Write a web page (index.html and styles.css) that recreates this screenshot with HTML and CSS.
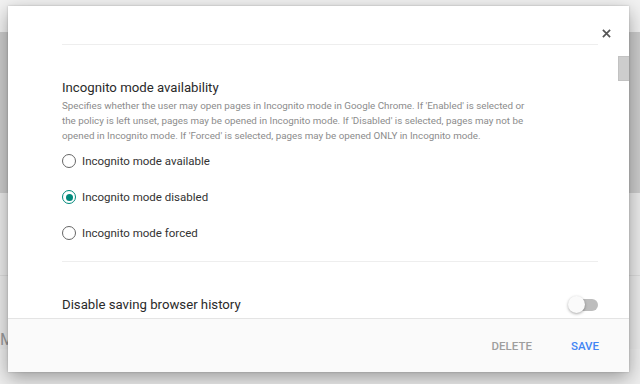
FILE: index.html
```html
<!DOCTYPE html>
<html lang="en">
<head>
    <meta name="viewport" content="width=device-width, initial-scale=1.0">
    <title>Policy settings</title>
    <link rel="stylesheet" href="styles.css">
</head>
<body>
    <!-- page behind the dialog -->
    <div class="page">
        <div class="page-top"></div>
        <div class="page-banner"></div>
        <div class="page-list">
            <div class="page-row"></div>
            <div class="page-row page-row-text"><span>M</span></div>
        </div>
    </div>

    <div class="dialog">
        <div class="dialog-body">
            <button class="close-btn" aria-label="Close">
                <svg width="9" height="9" viewBox="0 0 10 10">
                    <path d="M1 1 L9 9 M9 1 L1 9" stroke="#555" stroke-width="1.9" fill="none"/>
                </svg>
            </button>
            <div class="scrollbar"><div class="scroll-thumb"></div></div>

            <div class="rule top-rule"></div>

            <div class="policy">
                <h2 class="policy-title">Incognito mode availability</h2>
                <p class="policy-desc">Specifies whether the user may open pages in Incognito mode in Google Chrome. If 'Enabled' is selected or the policy is left unset, pages may be opened in Incognito mode. If 'Disabled' is selected, pages may not be opened in Incognito mode. If 'Forced' is selected, pages may be opened ONLY in Incognito mode.</p>
                <div class="radio-list">
                    <label class="radio-row">
                        <span class="radio"></span>
                        <span>Incognito mode available</span>
                    </label>
                    <label class="radio-row">
                        <span class="radio checked"></span>
                        <span>Incognito mode disabled</span>
                    </label>
                    <label class="radio-row">
                        <span class="radio"></span>
                        <span>Incognito mode forced</span>
                    </label>
                </div>
            </div>

            <div class="rule"></div>

            <div class="policy">
                <div class="policy-head">
                    <h2 class="policy-title">Disable saving browser history</h2>
                    <span class="toggle"><span class="toggle-knob"></span></span>
                </div>
                <p class="policy-desc">Disables saving browser history in Google Chrome and prevents users from changing this setting. If this setting is enabled, browsing history is not saved.</p>
            </div>
        </div>

        <div class="dialog-footer">
            <button class="text-btn delete-btn">Delete</button>
            <button class="text-btn save-btn">Save</button>
        </div>
    </div>
</body>
</html>
```

FILE: styles.css
```css
body {
    margin: 0;
    font-family: Roboto, "Liberation Sans", sans-serif;
    background-color: #eeeeee;
    overflow: hidden;
}

/* page behind the dialog */
.page {
    height: 384px;
}
.page-top {
    height: 32px;
    background-color: #f2f2f2;
}
.page-banner {
    height: 161px;
    background-color: #cccccc;
}
.page-list {
    background-color: #ebebeb;
}
.page-row {
    height: 82px;
    border-bottom: 1px solid #dcdcdc;
}
.page-row-text {
    height: auto;
    border: none;
    padding-top: 54px;
    font-size: 16px;
    color: #999;
}

/* dialog */
.dialog {
    position: absolute;
    left: 8px;
    top: 6px;
    width: 621px;
    height: 366px;
    background: white;
    box-shadow: 0 6px 18px rgba(0,0,0,0.35), 0 0 2px rgba(0,0,0,0.2);
    display: flex;
    flex-direction: column;
}
.dialog-body {
    position: relative;
    flex: 1;
    overflow: hidden;
    padding: 0 31px 0 54px;
}
.close-btn {
    position: absolute;
    right: 18px;
    top: 23px;
    width: 9px;
    height: 9px;
    padding: 0;
    border: none;
    background: none;
    display: flex;
}
.scrollbar {
    position: absolute;
    right: 0;
    top: 0;
    bottom: 0;
    width: 11px;
}
.scroll-thumb {
    margin-top: 50px;
    height: 23px;
    background-color: #cdcdcd;
    border: 1px solid #c2c2c2;
    border-right: none;
}

.rule {
    border-top: 1px solid #eeeeee;
}
.top-rule {
    margin-top: 38px;
}

.policy {
    padding-top: 33px;
}
.policy-title {
    margin: 0;
    font-size: 13.2px;
    font-weight: 400;
    line-height: 20px;
    color: #2a2a2a;
}
.policy-desc {
    margin: 0;
    max-width: 475px;
    font-size: 9.8px;
    line-height: 15px;
    color: #8c8c8c;
}
.policy-head {
    display: flex;
    justify-content: space-between;
    align-items: center;
}

.radio-list {
    display: flex;
    flex-direction: column;
    margin-bottom: 10px;
}
.radio-row {
    height: 36px;
    display: flex;
    align-items: center;
    gap: 6px;
    font-size: 11.5px;
    color: #333;
}
.radio {
    width: 14px;
    height: 14px;
    box-sizing: border-box;
    border: 1.5px solid #666;
    border-radius: 50%;
    display: flex;
    align-items: center;
    justify-content: center;
}
.radio.checked {
    border-color: #00897b;
}
.radio.checked::after {
    content: "";
    width: 7px;
    height: 7px;
    border-radius: 50%;
    background-color: #00897b;
}

.toggle {
    position: relative;
    width: 30px;
    height: 12px;
    display: flex;
    justify-content: flex-end;
}
.toggle::before {
    content: "";
    width: 24px;
    height: 12px;
    border-radius: 6px;
    background-color: #bdbdbd;
}
.toggle-knob {
    position: absolute;
    left: 0;
    top: -3px;
    width: 17px;
    height: 17px;
    border-radius: 50%;
    background: #fafafa;
    box-shadow: 0 1px 3px rgba(0,0,0,0.35);
}

.dialog-footer {
    height: 53px;
    border-top: 1px solid #e4e4e4;
    background-color: #fafafa;
    display: flex;
    justify-content: flex-end;
    align-items: center;
    gap: 39px;
    padding-right: 30px;
}
.text-btn {
    padding: 0;
    border: none;
    background: none;
    font-family: Roboto, "Liberation Sans", sans-serif;
    font-size: 11.5px;
    font-weight: 500;
    text-transform: uppercase;
    cursor: pointer;
}
.delete-btn {
    color: #9e9e9e;
}
.save-btn {
    color: #4285f4;
}
```
